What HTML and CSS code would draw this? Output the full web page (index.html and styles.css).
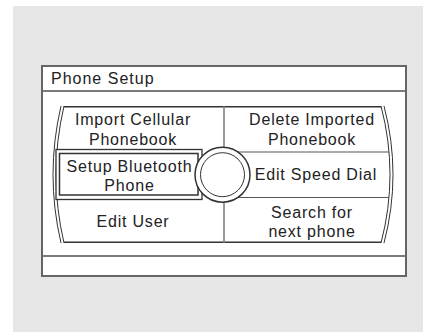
FILE: index.html
```html
<!DOCTYPE html>
<html>
<head>
<meta charset="utf-8">
<link rel="stylesheet" href="styles.css">
</head>
<body>
<div class="bg">
  <div class="panel">
    <div class="title">Phone Setup</div>
    <div class="menu-wrap">
      <div class="menu">
        <svg class="frame" width="340" height="137" viewBox="0 0 340 137">
          <g fill="none" stroke="#333">
            <path d="M11 0.75 H328" stroke-width="1.5"/>
            <path d="M11 136.25 H328" stroke-width="1.5"/>
            <path d="M8 0 Q-8 68.5 8 137" stroke-width="1"/>
            <path d="M11 0 Q-5 68.5 11 137" stroke-width="1"/>
            <path d="M328 0 Q346 68.5 328 137" stroke-width="1"/>
            <path d="M331 0 Q349 68.5 331 137" stroke-width="1"/>
            <path d="M171 0 V137" stroke="#7a7a7a" stroke-width="1.5"/>
            <path d="M170 46 H336" stroke="#555" stroke-width="1.2"/>
            <path d="M170 91.5 H336" stroke="#555" stroke-width="1.2"/>
            <rect x="3" y="43.5" width="146" height="50" fill="#fff" stroke-width="1.3"/>
            <rect x="6.5" y="47.5" width="138.5" height="41.5" stroke-width="1.5"/>
            <circle cx="169.5" cy="68.7" r="27.5" fill="#fff" stroke-width="1.5"/>
            <circle cx="169.5" cy="68.7" r="22" stroke-width="1"/>
          </g>
        </svg>
        <div class="cell l r1">Import Cellular<br>Phonebook</div>
        <div class="cell r r1">Delete Imported<br>Phonebook</div>
        <div class="cell l sel">Setup Bluetooth<br>Phone</div>
        <div class="cell r mid">Edit Speed Dial</div>
        <div class="cell l r3">Edit User</div>
        <div class="cell r r3">Search for<br>next phone</div>
      </div>
    </div>
    <div class="footer"></div>
  </div>
</div>
</body>
</html>
```
FILE: styles.css
```css
html, body {
  margin: 0;
  padding: 0;
  background: #fff;
}
.bg {
  margin: 6px 0 0 13px;
  width: 410px;
  height: 326px;
  background: #e6e6e6;
  padding: 59px 0 0 28px;
  box-sizing: border-box;
}
.panel {
  width: 366px;
  height: 212px;
  box-sizing: border-box;
  border: 2px solid #666;
  background: #fff;
  display: flex;
  flex-direction: column;
  font-family: "Liberation Sans", Arial, sans-serif;
  color: #222;
}
.title {
  height: 23px;
  line-height: 23px;
  border-bottom: 2px solid #7a7a7a;
  padding-left: 8px;
  font-size: 16px;
  letter-spacing: 1px;
}
.menu-wrap {
  padding: 14px 0 12px 10px;
}
.menu {
  position: relative;
  width: 340px;
  height: 137px;
  display: grid;
  grid-template-columns: 171px 169px;
  grid-template-rows: 44px 48px 45px;
  font-size: 16px;
  letter-spacing: 0.8px;
  line-height: 19.5px;
}
.frame {
  position: absolute;
  left: 0;
  top: 0;
  overflow: visible;
}
.cell {
  position: relative;
  display: flex;
  align-items: center;
  justify-content: center;
  text-align: center;
  padding-top: 3px;
}
.cell.l { padding-right: 11px; }
.cell.r { padding-left: 7px; }
.cell.sel { padding-right: 18px; padding-top: 4px; }
.cell.mid { padding-left: 15px; padding-top: 2px; }
.footer {
  flex: 1;
  border-top: 2px solid #7a7a7a;
}
```
